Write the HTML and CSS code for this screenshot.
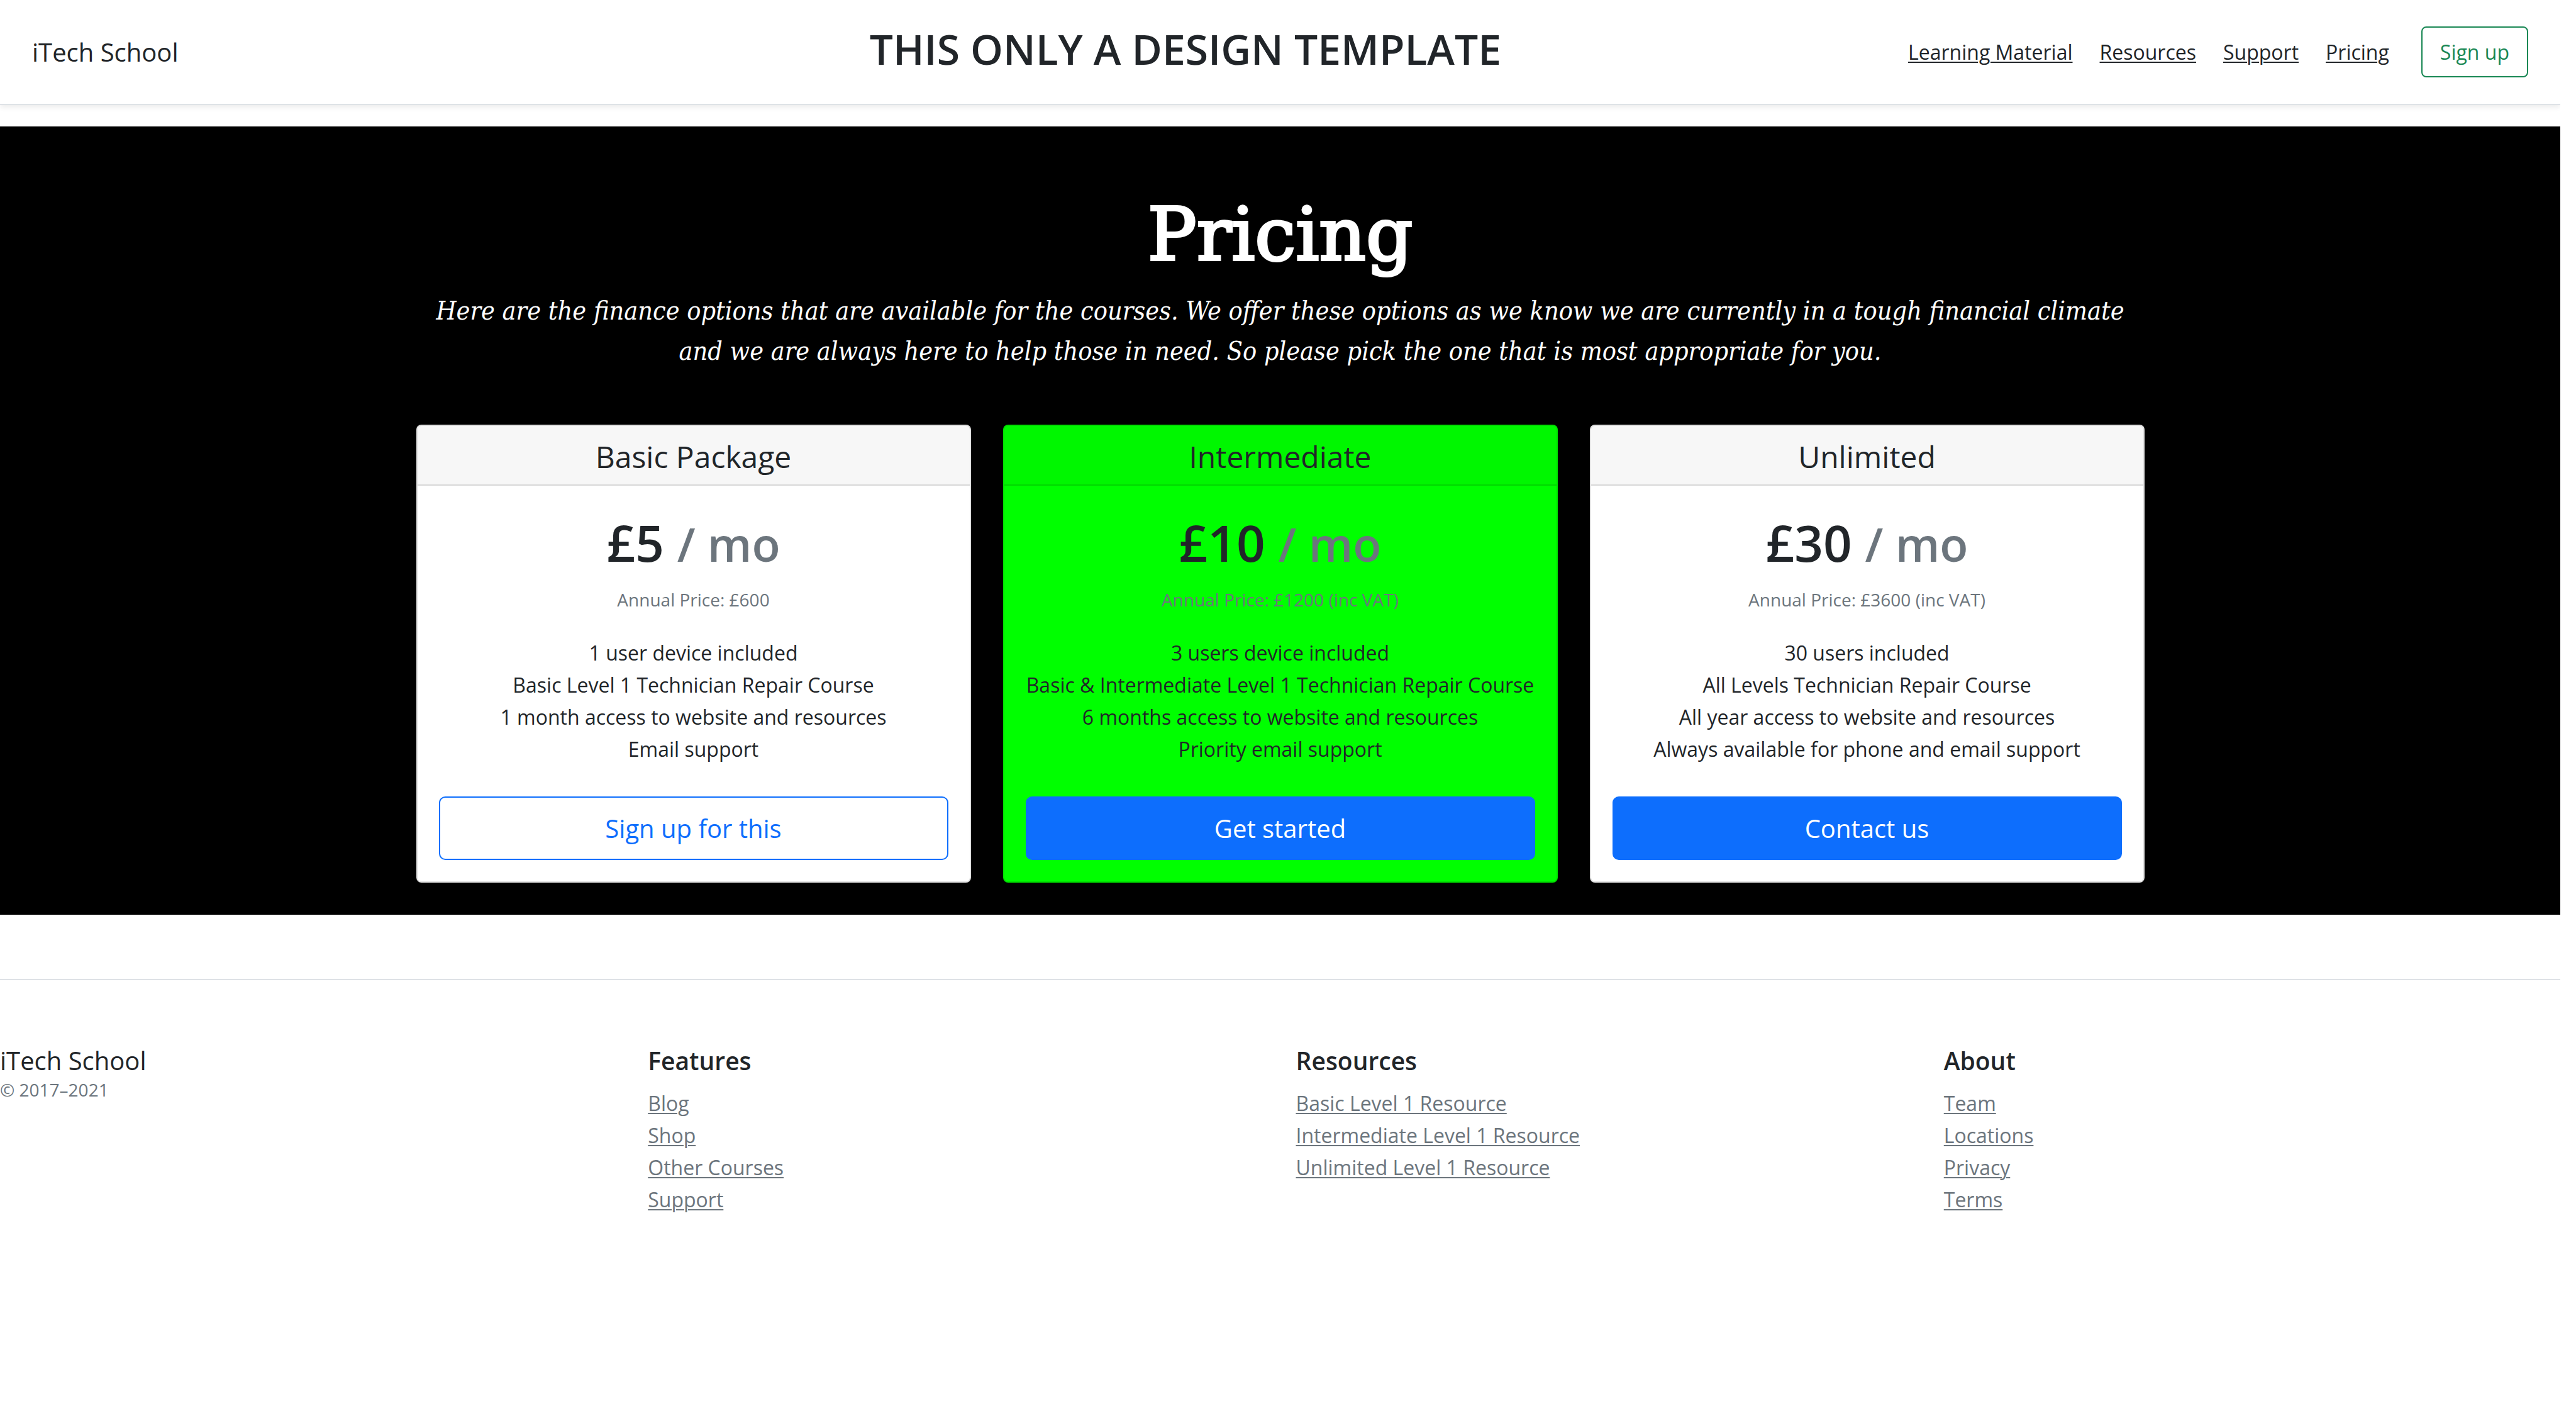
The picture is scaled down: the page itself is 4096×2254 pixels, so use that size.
FILE: index.html
```html
<!DOCTYPE html>
<html lang="en">
<head>
  <meta charset="utf-8">
  <meta name="viewport" content="width=device-width, initial-scale=1">
  <title>iTech School – Pricing</title>
  <link rel="stylesheet" href="styles.css">
</head>
<body>
  <header class="site-header">
    <p class="brand">iTech School</p>
    <h1 class="site-title">THIS ONLY A DESIGN TEMPLATE</h1>
    <nav class="site-nav">
      <a href="#">Learning Material</a>
      <a href="#">Resources</a>
      <a href="#">Support</a>
      <a href="#">Pricing</a>
    </nav>
    <button type="button" class="btn btn-success-outline">Sign up</button>
  </header>

  <main class="pricing">
    <div class="container">
      <h2 class="pricing-title">Pricing</h2>
      <p class="pricing-lead">Here are the finance options that are available for the courses. We offer these options as we know we are currently in a tough financial climate and we are always here to help those in need. So please pick the one that is most appropriate for you.</p>

      <div class="plans">
        <section class="card">
          <h3 class="card-header">Basic Package</h3>
          <div class="card-body">
            <p class="price">£5 <small>/ mo</small></p>
            <p class="annual">Annual Price: £600</p>
            <ul class="plan-list">
              <li>1 user device included</li>
              <li>Basic Level 1 Technician Repair Course</li>
              <li>1 month access to website and resources</li>
              <li>Email support</li>
            </ul>
            <button type="button" class="btn btn-large btn-primary-outline">Sign up for this</button>
          </div>
        </section>

        <section class="card card-highlight">
          <h3 class="card-header">Intermediate</h3>
          <div class="card-body">
            <p class="price">£10 <small>/ mo</small></p>
            <p class="annual">Annual Price: £1200 (inc VAT)</p>
            <ul class="plan-list">
              <li>3 users device included</li>
              <li>Basic &amp; Intermediate Level 1 Technician Repair Course</li>
              <li>6 months access to website and resources</li>
              <li>Priority email support</li>
            </ul>
            <button type="button" class="btn btn-large btn-primary">Get started</button>
          </div>
        </section>

        <section class="card">
          <h3 class="card-header">Unlimited</h3>
          <div class="card-body">
            <p class="price">£30 <small>/ mo</small></p>
            <p class="annual">Annual Price: £3600 (inc VAT)</p>
            <ul class="plan-list">
              <li>30 users included</li>
              <li>All Levels Technician Repair Course</li>
              <li>All year access to website and resources</li>
              <li>Always available for phone and email support</li>
            </ul>
            <button type="button" class="btn btn-large btn-primary">Contact us</button>
          </div>
        </section>
      </div>
    </div>
  </main>

  <footer class="site-footer">
    <div class="footer-row">
      <div class="footer-col">
        <p class="brand">iTech School</p>
        <small class="copyright">© 2017–2021</small>
      </div>
      <div class="footer-col">
        <h4 class="footer-heading">Features</h4>
        <ul class="footer-links">
          <li><a href="#">Blog</a></li>
          <li><a href="#">Shop</a></li>
          <li><a href="#">Other Courses</a></li>
          <li><a href="#">Support</a></li>
        </ul>
      </div>
      <div class="footer-col">
        <h4 class="footer-heading">Resources</h4>
        <ul class="footer-links">
          <li><a href="#">Basic Level 1 Resource</a></li>
          <li><a href="#">Intermediate Level 1 Resource</a></li>
          <li><a href="#">Unlimited Level 1 Resource</a></li>
        </ul>
      </div>
      <div class="footer-col">
        <h4 class="footer-heading">About</h4>
        <ul class="footer-links">
          <li><a href="#">Team</a></li>
          <li><a href="#">Locations</a></li>
          <li><a href="#">Privacy</a></li>
          <li><a href="#">Terms</a></li>
        </ul>
      </div>
    </div>
  </footer>
</body>
</html>
```
FILE: styles.css
```css
:root {
  --ink: #212529;
  --muted: #6c757d;
  --line: #dee2e6;
  --blue: #0d6efd;
  --green: #198754;
  --shade: rgba(0, 0, 0, .125);
}

*,
*::before,
*::after {
  box-sizing: border-box;
}

body {
  margin: 0 25px 0 0;
  background: #fff;
  color: var(--ink);
  font-family: "Open Sans", "Noto Sans", sans-serif;
  font-size: 32px;
  line-height: 51px;
}

h1, h2, h3, h4, p, ul {
  margin: 0;
  padding: 0;
  font-weight: 400;
}

ul {
  list-style: none;
}

a {
  color: inherit;
  text-decoration-thickness: 2px;
  text-underline-offset: 3px;
}

/* Buttons */
.btn {
  border: 2px solid transparent;
  border-radius: 8px;
  padding: 13px 28px;
  background: transparent;
  font: inherit;
  text-align: center;
  cursor: pointer;
}

.btn-success-outline {
  border-color: var(--green);
  color: var(--green);
}

.btn-large {
  width: 100%;
  border-radius: 10px;
  padding: 23px 34px;
  font-size: 40px;
}

.btn-primary {
  border-color: var(--blue);
  background: var(--blue);
  color: #fff;
}

.btn-primary-outline {
  border-color: var(--blue);
  color: var(--blue);
}

/* Header */
.site-header {
  display: flex;
  align-items: center;
  margin-bottom: 34px;
  border-bottom: 2px solid var(--line);
  padding: 34px 51px;
  background: #fff;
  box-shadow: 0 4px 8px rgba(0, 0, 0, .075);
}

.brand {
  font-size: 40px;
}

.site-header .brand {
  margin-right: auto;
}

.site-title {
  margin: 0 16.3% 11px 0;
  font-size: 66px;
  font-weight: 600;
  line-height: 86px;
}

.site-nav {
  display: flex;
  gap: 43px;
  margin-right: 51px;
}

/* Pricing */
.pricing {
  padding: 102px 0 51px;
  background: #000;
}

.container {
  max-width: 2748px;
  margin: 0 auto;
}

.pricing-title {
  margin-bottom: 19px;
  color: #fff;
  font-family: "DejaVu Serif", serif;
  font-size: 116px;
  line-height: 140px;
  text-align: center;
  -webkit-text-stroke: 4px #fff;
}

.pricing-lead {
  margin-bottom: 85px;
  color: #fff;
  font-family: "DejaVu Serif Condensed", "DejaVu Serif", serif;
  font-size: 41px;
  font-style: italic;
  line-height: 64px;
  text-align: center;
}

.plans {
  display: grid;
  grid-template-columns: repeat(3, 1fr);
  gap: 51px;
  text-align: center;
}

.card {
  overflow: hidden;
  border: 2px solid var(--shade);
  border-radius: 8px;
  background: #fff;
}

.card-highlight {
  background: #0f0;
}

.card-header {
  border-bottom: 2px solid var(--shade);
  padding: 20px 34px 15px;
  background: rgba(0, 0, 0, .03);
  font-size: 48px;
  line-height: 58px;
}

.card-body {
  padding: 34px;
}

.price {
  margin-bottom: 12px;
  font-size: 80px;
  font-weight: 600;
  line-height: 111px;
}

.price small {
  color: var(--muted);
  font-size: 74px;
}

.annual {
  margin-bottom: 38px;
  color: var(--muted);
  font-size: 28px;
  line-height: 42px;
}

.plan-list {
  margin-bottom: 50px;
}

/* Footer */
.site-footer {
  margin-top: 102px;
  border-top: 2px solid var(--line);
  padding: 102px 0;
}

.footer-row {
  display: grid;
  grid-template-columns: repeat(4, 1fr);
  margin: 0 -25px;
}

.footer-col {
  padding-left: 25px;
}

.copyright {
  display: block;
  color: var(--muted);
  font-size: 28px;
  line-height: 42px;
}

.footer-heading {
  margin-bottom: 17px;
  font-size: 39px;
  font-weight: 600;
}

.footer-links {
  color: var(--muted);
}
```
